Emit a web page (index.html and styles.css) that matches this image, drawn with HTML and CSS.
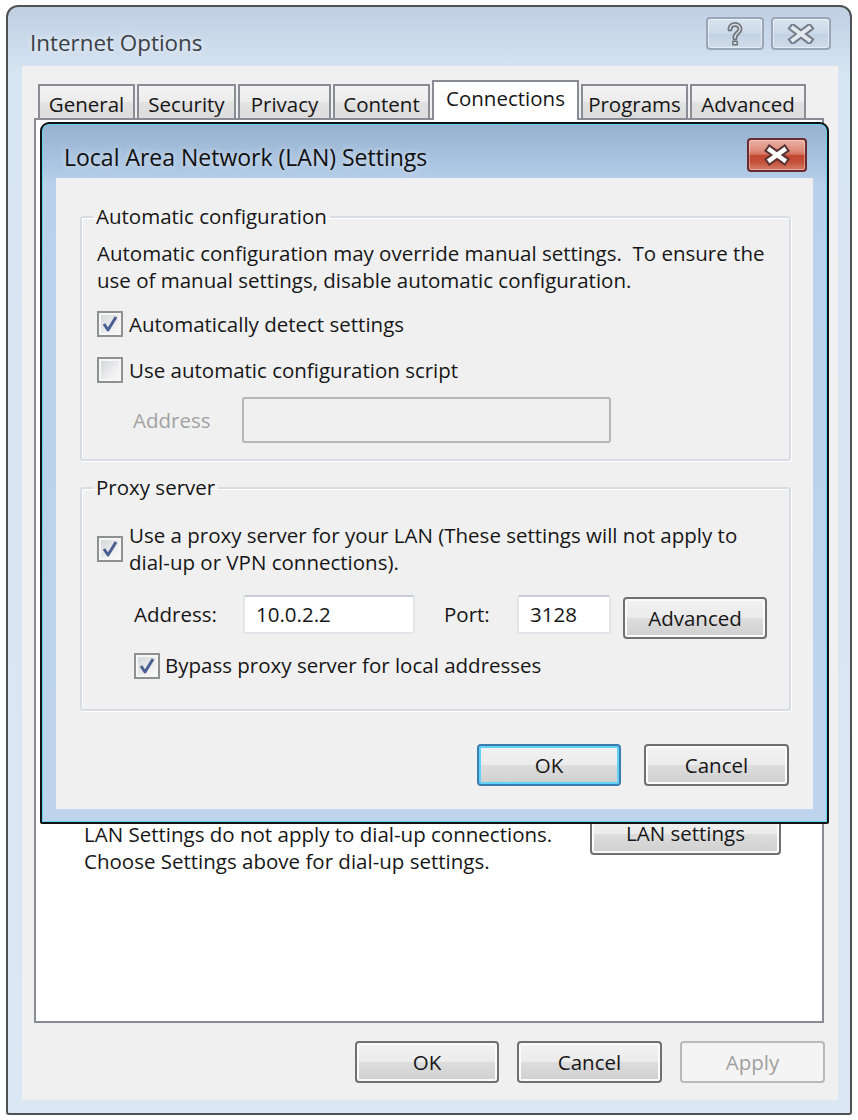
FILE: index.html
```html
<!DOCTYPE html>
<html>
<head>
<meta charset="utf-8">
<title>Internet Options</title>
<link rel="stylesheet" href="styles.css">
</head>
<body>
<div class="screen">
  <div class="window">
    <div class="titlebar">
      <div class="title">Internet Options</div>
      <div class="caption">
        <div class="cap-btn help">
          <svg width="18" height="26" viewBox="0 0 18 26">
            <path d="M4 8 C4 2 14 2 14 8 C14 12 9 12 9 16 L9 17" fill="none" stroke="#6d747c" stroke-width="5" stroke-linecap="round"/>
            <path d="M4 8 C4 2 14 2 14 8 C14 12 9 12 9 16 L9 17" fill="none" stroke="#d9dde2" stroke-width="1.6" stroke-linecap="round"/>
            <rect x="6" y="19.5" width="6" height="5" rx="1" fill="#6d747c"/>
            <rect x="7.5" y="21" width="3" height="2" fill="#d9dde2"/>
          </svg>
        </div>
        <div class="cap-btn close">
          <svg width="28" height="20" viewBox="0 0 28 20">
            <path d="M6 4 L22 16 M22 4 L6 16" stroke="#747d88" stroke-width="8" stroke-linecap="square"/>
            <path d="M6 4 L22 16 M22 4 L6 16" stroke="#e4e9ef" stroke-width="4" stroke-linecap="square"/>
          </svg>
        </div>
      </div>
    </div>
    <div class="client">
      <div class="tabs">
        <div class="tab">General</div>
        <div class="tab">Security</div>
        <div class="tab">Privacy</div>
        <div class="tab">Content</div>
        <div class="tab active">Connections</div>
        <div class="tab">Programs</div>
        <div class="tab">Advanced</div>
      </div>
      <div class="panel">
        <div class="lan-row">
          <div class="lan-text">LAN Settings do not apply to dial-up connections.<br>Choose Settings above for dial-up settings.</div>
          <div class="btn lan-btn">LAN settings</div>
        </div>
      </div>
      <div class="actions">
        <div class="btn act-ok">OK</div>
        <div class="btn act-cancel">Cancel</div>
        <div class="btn act-apply disabled">Apply</div>
      </div>
    </div>
  </div>

  <div class="dialog">
    <div class="dlg-titlebar">
      <div class="dlg-title">Local Area Network (LAN) Settings</div>
      <div class="dlg-close">
        <svg width="30" height="22" viewBox="0 0 30 22">
          <path d="M8 6 L22 16 M22 6 L8 16" stroke="#5a3434" stroke-width="8.5" stroke-linecap="square"/>
          <path d="M8 6 L22 16 M22 6 L8 16" stroke="#ffffff" stroke-width="4.5" stroke-linecap="square"/>
        </svg>
      </div>
    </div>
    <div class="dlg-client">
      <fieldset class="group g-auto">
        <legend>Automatic configuration</legend>
        <p class="desc">Automatic configuration may override manual settings.&nbsp; To ensure the<br>use of manual settings, disable automatic configuration.</p>
        <div class="check-row cr-detect">
          <span class="cb checked"><svg width="18" height="18" viewBox="0 0 18 18"><path d="M3 9 L7 15 L15 2" fill="none" stroke="#4c5f92" stroke-width="3" stroke-linejoin="round"/></svg></span>
          <span>Automatically detect settings</span>
        </div>
        <div class="check-row cr-script">
          <span class="cb"></span>
          <span>Use automatic configuration script</span>
        </div>
        <div class="addr-row">
          <span class="lbl lbl-disabled">Address</span>
          <span class="input input-disabled"></span>
        </div>
      </fieldset>

      <fieldset class="group g-proxy">
        <legend>Proxy server</legend>
        <div class="check-row cr-proxy">
          <span class="cb checked"><svg width="18" height="18" viewBox="0 0 18 18"><path d="M3 9 L7 15 L15 2" fill="none" stroke="#4c5f92" stroke-width="3" stroke-linejoin="round"/></svg></span>
          <span>Use a proxy server for your LAN (These settings will not apply to<br>dial-up or VPN connections).</span>
        </div>
        <div class="proxy-row">
          <span class="lbl lbl-addr">Address:</span>
          <span class="input input-addr">10.0.2.2</span>
          <span class="lbl lbl-port">Port:</span>
          <span class="input input-port">3128</span>
          <span class="btn adv-btn">Advanced</span>
        </div>
        <div class="check-row cr-bypass">
          <span class="cb checked"><svg width="18" height="18" viewBox="0 0 18 18"><path d="M3 9 L7 15 L15 2" fill="none" stroke="#4c5f92" stroke-width="3" stroke-linejoin="round"/></svg></span>
          <span>Bypass proxy server for local addresses</span>
        </div>
      </fieldset>

      <div class="dlg-actions">
        <div class="btn dlg-ok focused">OK</div>
        <div class="btn dlg-cancel">Cancel</div>
      </div>
    </div>
  </div>
</div>
</body>
</html>
```

FILE: styles.css
```css
* { box-sizing: border-box; margin: 0; padding: 0; }
html, body { width: 858px; height: 1120px; background: #ffffff; overflow: hidden; }
body {
  font-family: "Open Sans", "Noto Sans", "DejaVu Sans", sans-serif;
  font-size: 20.5px;
  line-height: 27px;
  color: #161616;
}

.screen { position: relative; width: 858px; height: 1120px; padding: 5px 0 0 6px; }

/* ---------- outer window ---------- */
.window {
  width: 846px;
  height: 1110px;
  border: 2px solid #4f5254;
  border-radius: 12px 12px 3px 3px;
  background: linear-gradient(#bfcfe2 0, #cddced 40px, #d8e5f2 70px, #dbe7f3 100%);
  padding: 0 12px 13px 14px;
  display: flex;
  flex-direction: column;
}
.titlebar {
  height: 59px;
  padding: 10px 7px 0 8px;
  display: flex;
  justify-content: space-between;
  align-items: flex-start;
}
.title {
  margin-top: 12px;
  font-size: 22.4px;
  color: #3c4046;
  text-shadow: 0 0 6px rgba(255,255,255,0.9);
}
.caption { display: flex; gap: 7px; }
.cap-btn {
  height: 33px;
  border: 2px solid #9aa6b6;
  border-radius: 4px;
  background: linear-gradient(#d9e3ee, #ccd9e8 50%, #c3d2e3 51%, #cedbea);
  box-shadow: inset 0 0 0 1px rgba(255,255,255,0.5);
  display: flex;
  align-items: center;
  justify-content: center;
}
.cap-btn.help { width: 58px; }
.cap-btn.close { width: 60px; }

.client {
  flex: 1;
  background: #f0f0f0;
  padding: 14px 0 0 12px;
  display: flex;
  flex-direction: column;
}

/* ---------- tabs ---------- */
.tabs {
  height: 40px;
  margin-bottom: -2px;
  padding-left: 4px;
  display: flex;
  align-items: flex-end;
  gap: 2px;
  position: relative;
  z-index: 1;
}
.tab {
  height: 34px;
  margin-bottom: 2px;
  border: 2px solid #898c95;
  border-bottom: none;
  background: linear-gradient(#f4f4f4, #ececec 50%, #e2e2e2 51%, #dcdcdc);
  display: flex;
  align-items: center;
  justify-content: center;
  padding-top: 4px;
  color: #161616;
}
.tab:nth-child(1) { width: 97px; }
.tab:nth-child(2) { width: 99px; }
.tab:nth-child(3) { width: 93px; }
.tab:nth-child(4) { width: 97px; }
.tab:nth-child(5) { width: 147px; }
.tab:nth-child(6) { width: 107px; }
.tab:nth-child(7) { width: 116px; }
.tab.active {
  height: 40px;
  margin-bottom: 0;
  background: #ffffff;
  padding-top: 0;
  padding-bottom: 6px;
}

.panel {
  width: 790px;
  height: 905px;
  background: #ffffff;
  border: 2px solid #898c95;
  padding: 0 0 0 48px;
}
.lan-row { margin-top: 692px; display: flex; align-items: flex-start; }
.lan-text { width: 506px; margin-top: 9px; }
.lan-btn { width: 191px; height: 43px; }

.actions {
  margin-top: 18px;
  padding-right: 13px;
  display: flex;
  justify-content: flex-end;
  gap: 18px;
}
.act-ok { width: 144px; height: 42px; }
.act-cancel { width: 145px; height: 42px; }
.act-apply { width: 145px; height: 42px; }

/* ---------- buttons ---------- */
.btn {
  display: flex;
  align-items: center;
  justify-content: center;
  border: 2px solid #707070;
  border-radius: 4px;
  background: linear-gradient(#f2f2f2, #ebebeb 50%, #dddddd 51%, #cfcfcf);
  box-shadow: inset 0 0 0 2px #fbfbfb;
  color: #161616;
}
.btn.disabled {
  border-color: #b7babd;
  background: #f4f4f4;
  box-shadow: none;
  color: #a0a0a0;
}
.btn.focused {
  border-color: #3a7eb0;
  box-shadow: inset 0 0 0 2px #62d2f6;
}

/* ---------- LAN dialog ---------- */
.dialog {
  position: absolute;
  left: 40px;
  top: 122px;
  width: 789px;
  height: 702px;
  border: 2px solid #121212;
  border-radius: 9px 9px 2px 2px;
  background: linear-gradient(#97b2d0 0, #aac4e1 40px, #b9d1ea 60px, #bdd4ec 100%);
  box-shadow: inset 0 0 0 1px #5fd6ee;
  padding: 0 14px 13px 14px;
  display: flex;
  flex-direction: column;
}
.dlg-titlebar {
  height: 54px;
  padding: 8px 6px 0 8px;
  display: flex;
  justify-content: space-between;
  align-items: center;
}
.dlg-title { margin-top: 4px; font-size: 23px; color: #101010; text-shadow: 0 0 6px rgba(255,255,255,0.7); }
.dlg-close {
  width: 60px;
  height: 34px;
  border: 2px solid #6a2b30;
  border-radius: 4px;
  background: linear-gradient(#eab0a4 0, #de8d7c 35%, #d46f5c 48%, #c2452f 52%, #c4523c 75%, #d7806a 100%);
  box-shadow: inset 0 0 0 1px rgba(255,255,255,0.35);
  display: flex;
  align-items: center;
  justify-content: center;
}

.dlg-client {
  flex: 1;
  background: #f0f0f0;
  padding: 0 22px 0 24px;
  display: flex;
  flex-direction: column;
}

.group {
  border: 2px solid #d7dde3;
  border-radius: 3px;
  box-shadow: inset 1px 1px 0 #ffffff, 1px 1px 0 #ffffff;
  padding: 0 0 0 15px;
  min-width: 0;
}
.group legend {
  margin-left: -4px;
  padding: 0 3px;
  line-height: 27px;
}
.g-auto { margin-top: 25px; padding-bottom: 16px; }
.g-proxy { margin-top: 13px; padding-bottom: 30px; }

.desc { margin-top: 10px; }

.check-row { display: flex; align-items: center; gap: 6px; }
.cr-detect { margin-top: 16px; height: 28px; }
.cr-script { margin-top: 18px; height: 28px; }
.cr-proxy { margin-top: 21px; }
.cr-bypass { margin-top: 13px; margin-left: 37px; gap: 5px; }

.cb {
  flex: none;
  width: 26px;
  height: 26px;
  border: 2px solid #8f9090;
  background: linear-gradient(135deg, #d2d3d5, #eeeeef 60%, #fbfbfb);
  box-shadow: inset 0 0 0 2px #f6f6f6;
  display: flex;
  align-items: center;
  justify-content: center;
}

.addr-row { margin-top: 13px; margin-left: 36px; display: flex; align-items: center; }
.lbl { flex: none; }
.lbl-disabled { width: 109px; color: #a2a2a2; }

.input {
  flex: none;
  display: flex;
  align-items: center;
  background: #ffffff;
  border: 2px solid #e2e6ea;
  border-top-color: #c9ccd2;
  border-radius: 3px;
  padding-left: 11px;
}
.input-disabled {
  width: 369px;
  height: 46px;
  background: #f0f0f0;
  border: 2px solid #b4b6b8;
}

.proxy-row { margin-top: 19px; margin-left: 37px; display: flex; align-items: flex-start; }
.lbl-addr { width: 109px; line-height: 39px; }
.input-addr { width: 172px; height: 39px; }
.lbl-port { margin-left: 29px; width: 73px; line-height: 39px; }
.input-port { width: 94px; height: 39px; }
.adv-btn { margin-left: 12px; margin-top: 2px; width: 144px; height: 42px; flex: none; }

.dlg-actions {
  margin-top: 33px;
  padding-right: 2px;
  display: flex;
  justify-content: flex-end;
  gap: 23px;
}
.dlg-ok { width: 144px; height: 42px; }
.dlg-cancel { width: 145px; height: 42px; }
```
